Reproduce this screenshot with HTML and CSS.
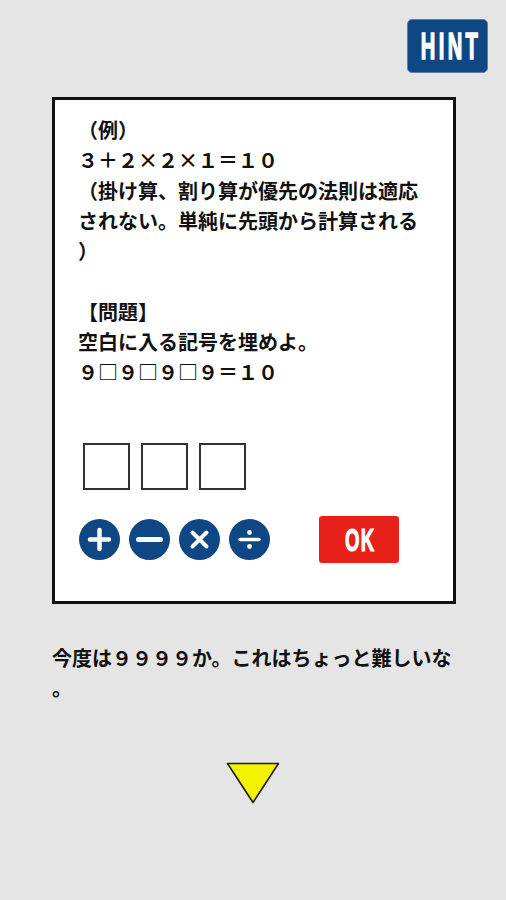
FILE: index.html
```html
<!DOCTYPE html>
<html lang="ja">
<head>
<meta charset="utf-8">
<title>問題</title>
<link rel="stylesheet" href="styles.css">
</head>
<body>
<div class="top">
  <div class="hint"><span class="hint-text">HINT</span></div>
</div>
<div class="card">
  <div class="text">
    <div class="line">（例）</div>
    <div class="line">３＋２×２×１＝１０</div>
    <div class="line">（掛け算、割り算が優先の法則は適応</div>
    <div class="line">されない。単純に先頭から計算される</div>
    <div class="line">）</div>
    <div class="line">&nbsp;</div>
    <div class="line">【問題】</div>
    <div class="line">空白に入る記号を埋めよ。</div>
    <div class="line">９□９□９□９＝１０</div>
  </div>
  <div class="slots">
    <div class="slot"></div>
    <div class="slot"></div>
    <div class="slot"></div>
  </div>
  <div class="controls">
    <div class="ops">
      <div class="op"><svg viewBox="0 0 41 41" width="41" height="41"><circle cx="20.5" cy="20.5" r="20.5" fill="#0e4783"/><path d="M20.5 11v19M11 20.5h19" stroke="#fff" stroke-width="4.5" stroke-linecap="round"/></svg></div>
      <div class="op"><svg viewBox="0 0 41 41" width="41" height="41"><circle cx="20.5" cy="20.5" r="20.5" fill="#0e4783"/><path d="M9.5 20.5h22" stroke="#fff" stroke-width="5" stroke-linecap="round"/></svg></div>
      <div class="op"><svg viewBox="0 0 41 41" width="41" height="41"><circle cx="20.5" cy="20.5" r="20.5" fill="#0e4783"/><path d="M13.5 13.5l14 14M27.5 13.5l-14 14" stroke="#fff" stroke-width="4" stroke-linecap="round"/></svg></div>
      <div class="op"><svg viewBox="0 0 41 41" width="41" height="41"><circle cx="20.5" cy="20.5" r="20.5" fill="#0e4783"/><path d="M11 20.5h19" stroke="#fff" stroke-width="3.5" stroke-linecap="round"/><circle cx="20.5" cy="13.5" r="2.4" fill="#fff"/><circle cx="20.5" cy="27.5" r="2.4" fill="#fff"/></svg></div>
    </div>
    <div class="ok"><span class="ok-text">OK</span></div>
  </div>
</div>
<div class="message">
  <div class="line">今度は９９９９か。これはちょっと難しいな</div>
  <div class="line">。</div>
</div>
<div class="next">
  <svg viewBox="0 0 54 42" width="54" height="42"><polygon points="1.5,1.5 52.5,1.5 27,40.5" fill="#f3f300" stroke="#1e1e1e" stroke-width="1.6" stroke-linejoin="round"/></svg>
</div>
</body>
</html>
```
FILE: styles.css
```css
html, body {
  margin: 0;
  padding: 0;
}
body {
  background: #e5e5e5;
  width: 506px;
  height: 900px;
  font-family: "Noto Sans CJK JP", "Noto Sans", sans-serif;
  font-weight: 700;
  color: #111;
}
.top {
  display: flex;
  justify-content: flex-end;
  padding: 19px 18px 0 0;
}
.hint {
  width: 81px;
  height: 54px;
  box-sizing: border-box;
  background: #0e4783;
  border: 1px solid #5a7ea8;
  border-radius: 5px;
  display: flex;
  align-items: center;
  justify-content: center;
}
.hint-text {
  font-family: "Liberation Sans", sans-serif;
  font-weight: 700;
  font-size: 36px;
  line-height: 1;
  color: #fff;
  letter-spacing: 6px;
  margin-right: -6px;
  -webkit-text-stroke: 1.5px #fff;
  transform: scaleX(0.56);
  margin-top: 2px;
}
.card {
  margin: 24px 0 0 52px;
  width: 404px;
  box-sizing: border-box;
  background: #fff;
  border: 3px solid #111;
  padding: 15px 0 38px 23px;
}
.text {
  font-size: 20px;
  line-height: 30.25px;
}
.line {
  white-space: nowrap;
}
.slots {
  display: flex;
  gap: 11px;
  margin: 56px 0 0 5px;
}
.slot {
  width: 47px;
  height: 47px;
  box-sizing: border-box;
  border: 2px solid #333;
}
.controls {
  display: flex;
  align-items: center;
  margin-top: 26px;
  height: 47px;
}
.ops {
  display: flex;
  gap: 9px;
  margin-left: 1px;
}
.op {
  width: 41px;
  height: 41px;
}
.op svg {
  display: block;
}
.ok {
  margin-left: 49px;
  width: 80px;
  height: 47px;
  background: #e8201a;
  border-radius: 3px;
  display: flex;
  align-items: center;
  justify-content: center;
}
.ok-text {
  font-family: "Liberation Sans", sans-serif;
  font-weight: 700;
  font-size: 31px;
  line-height: 1;
  color: #fff;
  letter-spacing: 2px;
  margin-right: -2px;
  -webkit-text-stroke: 1.2px #fff;
  transform: scaleX(0.6);
  margin-top: 1px;
}
.message {
  margin: 39px 0 0 52px;
  font-size: 20px;
  line-height: 30px;
}
.next {
  display: flex;
  justify-content: center;
  margin-top: 59px;
}
.next svg {
  display: block;
}
```
